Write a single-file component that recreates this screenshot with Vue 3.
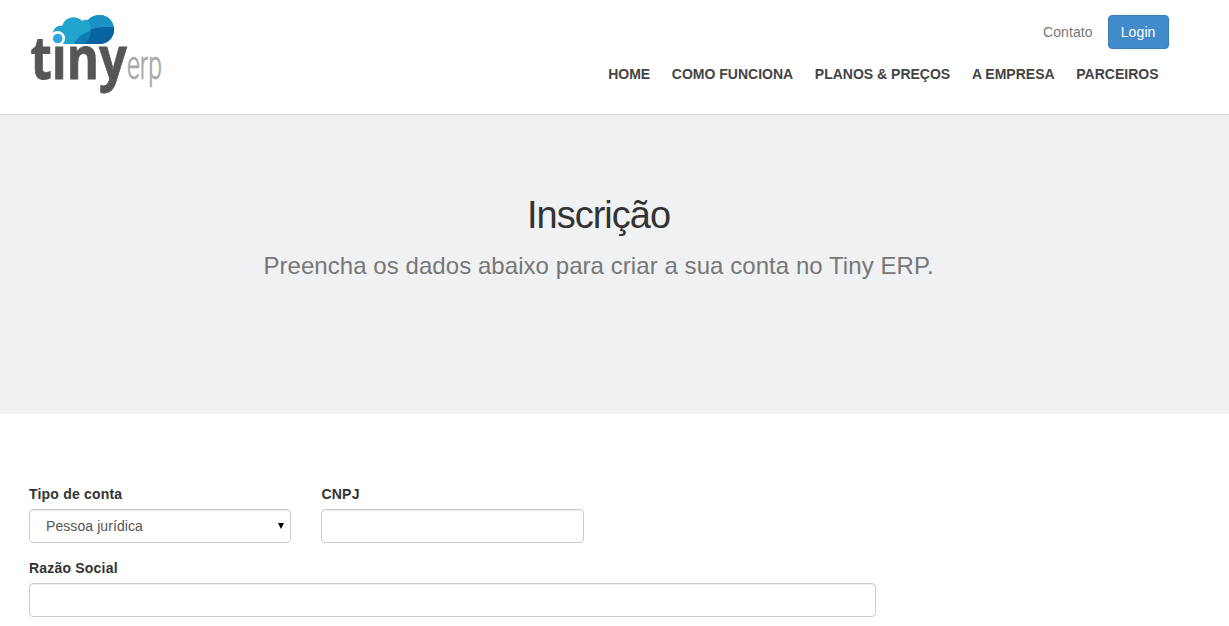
<script setup>
import { reactive } from 'vue'

const menu = ['Home', 'Como funciona', 'Planos & Preços', 'A Empresa', 'Parceiros']

const form = reactive({
  tipo: 'J',
  cnpj: '',
  razaoSocial: ''
})
</script>

<template>
  <header class="topo">
    <div class="container topo-conteudo">
      <a class="logo" href="#">
        <svg width="134" height="84" viewBox="29 13 134 84">
          <text class="tiny" x="30.5" y="78.500" textLength="96.500" lengthAdjust="spacingAndGlyphs">tiny</text>
          <text class="erp" x="127" y="79" textLength="35" lengthAdjust="spacingAndGlyphs">erp</text>
          <!-- nuvem -->
          <clipPath id="nuvem">
            <path d="M53 44V33C53 28 58 25 62.500 25.500C64 20 69 17 74 17.300C78 17.500 80.500 19 82 21C84 19.500 86.500 19.500 88 20C91 16.500 95 15 100 15C108 15 114 21.500 114 29.500C114 38 107.500 44 99 44Z" />
          </clipPath>
          <g clip-path="url(#nuvem)">
            <rect x="50" y="13" width="66" height="32" fill="#21a5cf" />
            <path d="M87 20C91 16 95 14 100 14C109 14 115 21 115 30H90C91 26 90 22 87 20Z" fill="#1a93c3" />
            <path d="M73 45C79 34 91 27 115 27V45Z" fill="#117db6" />
            <path d="M90.700 29.500C98 26.800 106 26.500 115 27.500V45H84C89 40 91.500 35 90.700 29.500Z" fill="#0863a3" />
          </g>
          <circle cx="57.500" cy="38.500" r="7.600" fill="#fff" />
          <circle cx="57.700" cy="38.500" r="4.800" fill="#2fa6dc" />
        </svg>
      </a>
      <div class="navegacao">
        <div class="acoes">
          <a class="contato" href="#">Contato</a>
          <a class="login" href="#">Login</a>
        </div>
        <nav class="menu">
          <a v-for="item in menu" :key="item" href="#">{{ item }}</a>
        </nav>
      </div>
    </div>
  </header>

  <section class="destaque">
    <div class="container">
      <h1>Inscrição</h1>
      <p>Preencha os dados abaixo para criar a sua conta no Tiny ERP.</p>
    </div>
  </section>

  <form class="container formulario" @submit.prevent>
    <div class="linha">
      <div class="campo">
        <label for="tipo">Tipo de conta</label>
        <div class="selecao">
          <select id="tipo" v-model="form.tipo">
            <option value="F">Pessoa física</option>
            <option value="J">Pessoa jurídica</option>
          </select>
          <svg class="seta" width="6" height="6" viewBox="0 0 6 6">
            <path d="M0 0H6L3 6Z" />
          </svg>
        </div>
      </div>
      <div class="campo">
        <label for="cnpj">CNPJ</label>
        <input id="cnpj" v-model="form.cnpj" type="text" />
      </div>
    </div>
    <div class="linha">
      <div class="campo largo">
        <label for="razao">Razão Social</label>
        <input id="razao" v-model="form.razaoSocial" type="text" />
      </div>
    </div>
  </form>
</template>

<style>
body {
  margin: 0;
  background: #fff;
  color: #333;
  font-family: "Liberation Sans", Arial, sans-serif;
  font-size: 14px;
  line-height: 20px;
}
</style>

<style scoped>
* {
  box-sizing: border-box;
}

a {
  text-decoration: none;
}

.container {
  width: 1170px;
  margin-left: 13.5px;
  padding: 0 15px;
}

.topo {
  height: 115px;
  border-bottom: 1px solid #dcdddf;
}

.topo-conteudo {
  display: flex;
  justify-content: space-between;
}

.logo {
  padding-top: 13px;
}

.logo svg {
  display: block;
  overflow: visible;
}

.tiny {
  font: bold 59px "Open Sans", sans-serif;
  fill: #565657;
  stroke: #565657;
  stroke-width: 0.8px;
}

.erp {
  font: 300 40px Roboto, sans-serif;
  fill: #a9a9aa;
  stroke: #a9a9aa;
  stroke-width: 0.7px;
}

.navegacao {
  padding-top: 15px;
}

.acoes {
  display: flex;
  justify-content: flex-end;
  align-items: center;
  gap: 15px;
}

.contato {
  color: #777;
  letter-spacing: 0.1px;
}

.login {
  padding: 6px 12px;
  border: 1px solid #357ebd;
  border-radius: 4px;
  background: #428bca;
  color: #fff;
  letter-spacing: 0.1px;
}

.menu {
  display: flex;
  justify-content: flex-end;
  gap: 21.7px;
  padding: 15px 10px 0 0;
}

.menu a {
  color: #444;
  font-weight: bold;
  text-transform: uppercase;
}

.destaque {
  height: 299px;
  padding-top: 79px;
  background: #f0f1f3;
  text-align: center;
}

h1 {
  margin: 0;
  font-size: 38px;
  font-weight: normal;
  line-height: 42px;
  letter-spacing: -1px;
}

.destaque p {
  margin: 13px 0 0;
  color: #777;
  font-size: 24px;
  line-height: 34px;
  letter-spacing: 0.06px;
}

.formulario {
  padding-top: 70px;
}

.linha {
  display: flex;
  gap: 30px;
  margin-bottom: 15px;
}

.campo {
  width: 262.5px;
}

.largo {
  width: 847.5px;
}

label {
  display: block;
  margin-bottom: 5px;
  padding-left: 0.5px;
  font-weight: bold;
  letter-spacing: 0.2px;
}

input,
select {
  display: block;
  width: 100%;
  height: 34px;
  padding: 6px 12px;
  border: 1px solid #ccc;
  border-radius: 4px;
  background: #fff;
  box-shadow: inset 0 1px 1px rgba(0, 0, 0, 0.075);
  color: #555;
  font: inherit;
}

select {
  padding-left: 16.5px;
  appearance: none;
  letter-spacing: 0.08px;
}

.selecao {
  position: relative;
}

.seta {
  position: absolute;
  top: 14px;
  right: 7px;
}
</style>
